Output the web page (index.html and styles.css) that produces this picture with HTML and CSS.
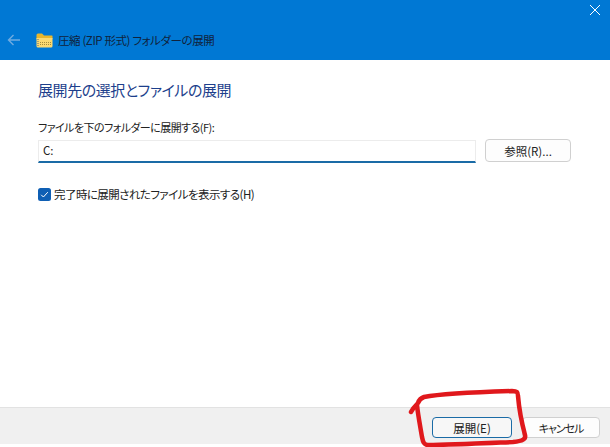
FILE: index.html
```html
<!DOCTYPE html>
<html lang="ja">
<head>
<meta charset="utf-8">
<title>圧縮 (ZIP 形式) フォルダーの展開</title>
<link rel="stylesheet" href="styles.css">
</head>
<body>
<div class="window">
  <header class="header">
    <div class="close-row">
      <svg class="close" width="12" height="12" viewBox="0 0 12 12"><path d="M1 1 L11 11 M11 1 L1 11" stroke="#fff" stroke-width="1" fill="none"/></svg>
    </div>
    <div class="title-row">
      <svg class="back" width="14" height="12" viewBox="0 0 14 12"><path d="M13 6 H1.5 M6.5 1 L1.5 6 L6.5 11" stroke="#6fabe0" stroke-width="1.4" fill="none"/></svg>
      <svg class="folder" width="17" height="15" viewBox="0 0 17 15">
        <path d="M0.5 2 Q0.5 0.5 2 0.5 H6 L8 2.5 H16 Q16.5 2.5 16.5 3 V6 H0.5 Z" fill="#e8b62c"/>
        <path d="M0.5 5 H16.5 V13 Q16.5 14.5 15 14.5 H2 Q0.5 14.5 0.5 13 Z" fill="#fbd970"/>
        <path d="M2 6 V14" stroke="#8a8a78" stroke-width="1.5" stroke-dasharray="1 1"/>
        <path d="M4 9.5 H15 M4 11.5 H15" stroke="#a58c3c" stroke-width="1" stroke-dasharray="1 1"/>
      </svg>
      <span class="title">圧縮 (ZIP 形式) フォルダーの展開</span>
    </div>
  </header>
  <main class="content">
    <h1 class="heading">展開先の選択とファイルの展開</h1>
    <label class="field-label">ファイルを下のフォルダーに展開する(F):</label>
    <div class="path-row">
      <div class="path-input">C:</div>
      <button class="btn browse">参照(R)...</button>
    </div>
    <div class="check-row">
      <svg class="check" width="13" height="13" viewBox="0 0 13 13"><rect width="13" height="13" rx="2.5" fill="#0f5fb4"/><path d="M3.2 6.8 L5.4 9 L9.8 4.2" stroke="#fff" stroke-width="1" fill="none"/></svg>
      <span class="check-label">完了時に展開されたファイルを表示する(H)</span>
    </div>
  </main>
  <footer class="footer">
    <button class="btn primary">展開(E)</button>
    <button class="btn cancel">キャンセル</button>
  </footer>
  <div class="bottom-strip"></div>
  <svg class="scribble" width="610" height="447" viewBox="0 0 610 447">
    <path d="M411 412 C413 408 416 405 418 403 C419 400 421 398 424 397 C440 394 480 392 512 391 C517 391 518 392 518 396 C519 408 521 420 525 435 C526 439 523 441 513 442 C490 443 450 445 428 445 C424 445 423 442 422 437 C420 425 418 415 417 405" fill="none" stroke="#e0181c" stroke-width="4.5" stroke-linecap="round" stroke-linejoin="round"/>
  </svg>
</div>
</body>
</html>
```
FILE: styles.css
```css
* { box-sizing: border-box; }
html, body { margin: 0; padding: 0; }
body {
  width: 610px;
  height: 447px;
  overflow: hidden;
  background: #fff;
  font-family: "Noto Sans CJK JP", "Liberation Sans", sans-serif;
  font-size: 11.5px;
  font-feature-settings: "palt";
  color: #222;
}
.window {
  position: relative;
  width: 610px;
  height: 447px;
  display: flex;
  flex-direction: column;
}
.header {
  height: 60px;
  background: #0078d4;
  display: flex;
  flex-direction: column;
}
.close-row {
  height: 25px;
  display: flex;
  justify-content: flex-end;
  padding: 4px 9px 0 0;
}
.title-row {
  display: flex;
  align-items: center;
  height: 30px;
  padding-left: 7px;
}
.back { margin-right: 15px; }
.folder { margin-right: 5px; }
.title {
  font-size: 11.5px;
  letter-spacing: -0.4px;
  color: #10233c;
}
.content {
  flex: 1;
  padding: 0 34px 0 38px;
  display: flex;
  flex-direction: column;
}
.heading {
  margin: 19px 0 0;
  font-size: 15px;
  line-height: 22px;
  font-weight: 400;
  letter-spacing: -0.43px;
  color: #1d3f8c;
}
.field-label {
  margin-top: 17px;
  line-height: 18px;
  font-size: 11px;
  letter-spacing: -0.55px;
}
.path-row {
  display: flex;
  align-items: flex-start;
  gap: 9px;
  margin-top: 3px;
}
.path-input {
  width: 438px;
  height: 23px;
  margin-top: 1px;
  padding-left: 4px;
  border: 1px solid #ececec;
  border-bottom: 2px solid #1a6ba6;
  line-height: 19px;
  background: #fff;
}
.btn {
  font: inherit;
  font-feature-settings: inherit;
  color: #222;
  padding: 0;
  background: #fdfdfd;
  border: 1px solid #d0d0d0;
  border-radius: 4px;
}
.browse {
  width: 86px;
  height: 23px;
}
.check-row {
  display: flex;
  align-items: center;
  gap: 3px;
  margin-top: 24px;
  height: 14px;
}
.check-label {
  letter-spacing: -0.55px;
}
.footer {
  height: 37px;
  background: #f0f0f0;
  border-top: 1px solid #e2e2e2;
  display: flex;
  justify-content: flex-end;
  gap: 10px;
  padding: 9px 10px 0 0;
}
.primary {
  width: 80px;
  height: 21px;
  border-color: #1a6ba6;
  background: #f7f7f7;
}
.cancel {
  width: 78px;
  height: 21px;
  font-size: 11px;
  letter-spacing: -1px;
}
.bottom-strip {
  height: 3px;
  background: #fff;
}
.scribble {
  position: absolute;
  left: 0;
  top: 0;
  pointer-events: none;
}
```
